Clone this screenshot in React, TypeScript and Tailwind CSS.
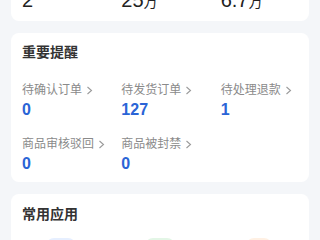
const FONT = { fontFamily: '"Liberation Sans", "Noto Sans CJK SC", sans-serif' }

function Chevron() {
  return (
    <svg width="7" height="9" viewBox="0 0 7 9" className="ml-[4px] shrink-0">
      <polyline points="1.5,1 5.5,4.5 1.5,8" fill="none" stroke="#9a9a9a" strokeWidth="1.1" />
    </svg>
  )
}

const reminders = [
  { label: '待确认订单', value: '0' },
  { label: '待发货订单', value: '127' },
  { label: '待处理退款', value: '1' },
  { label: '商品审核驳回', value: '0' },
  { label: '商品被封禁', value: '0' },
]

const stats = [
  { num: '2', unit: '' },
  { num: '25', unit: '万' },
  { num: '6.7', unit: '万' },
]

export default function App() {
  return (
    <div className="w-[320px] h-[240px] overflow-hidden bg-[#f4f6f9]" style={FONT}>
      <div className="-mt-[12px] px-[11px] flex flex-col gap-3">
        {/* 顶部数据 */}
        <div className="bg-white rounded-lg pb-[7px] grid grid-cols-3">
          {stats.map((s, i) => (
            <div key={i} className="pl-[11px] text-[20px] leading-[24px] text-[#222]">
              {s.num}
              {s.unit && <span className="text-[14px]">{s.unit}</span>}
            </div>
          ))}
        </div>

        {/* 重要提醒 */}
        <div className="bg-white rounded-lg pt-[9px] pb-[7px]">
          <div className="pl-[11px] text-[14px] leading-[20px] font-bold text-[#333]">重要提醒</div>
          <div className="mt-[19px] grid grid-cols-3 gap-y-[14px]">
            {reminders.map((r) => (
              <div key={r.label} className="pl-[11px]">
                <div className="flex items-center text-[12px] leading-[18px] text-[#8a8a8a]">
                  {r.label}
                  <Chevron />
                </div>
                <div className="text-[16px] leading-[22px] font-bold text-[#2a64d6]">{r.value}</div>
              </div>
            ))}
          </div>
        </div>

        {/* 常用应用 */}
        <div className="bg-white rounded-lg pt-[10px] pb-4">
          <div className="pl-[11px] text-[14px] leading-[20px] font-bold text-[#333]">常用应用</div>
          <div className="mt-[14px] grid grid-cols-3">
            <div className="flex justify-center">
              <div className="w-[30px] h-[30px] rounded-lg bg-[#e6efff]" />
            </div>
            <div className="flex justify-center">
              <div className="w-[30px] h-[30px] rounded-lg bg-[#e3f6e6]" />
            </div>
            <div className="flex justify-center">
              <div className="w-[26px] h-[30px] rounded-lg bg-[#fff0e3]" />
            </div>
          </div>
        </div>
      </div>
    </div>
  )
}
